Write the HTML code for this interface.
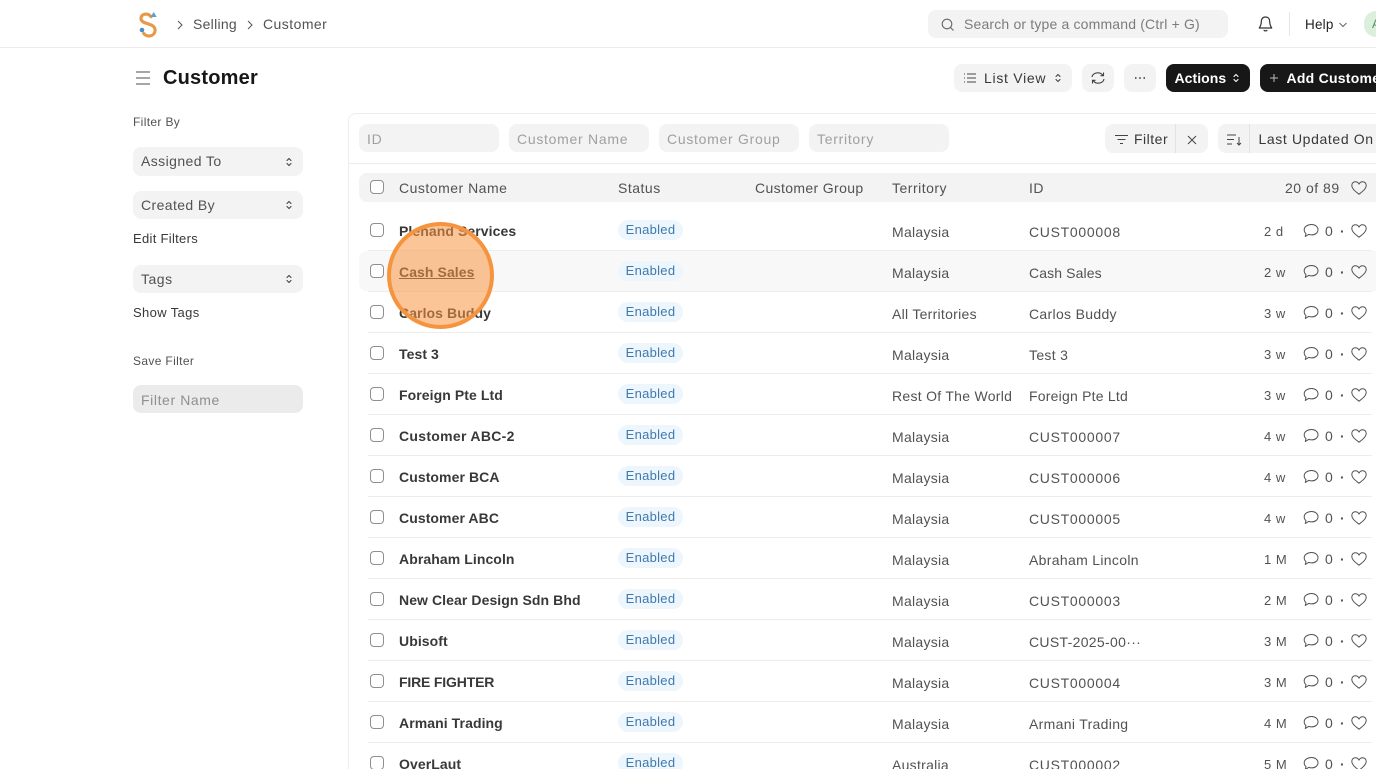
<!DOCTYPE html>
<html><head><meta charset="utf-8"><style>
html,body{margin:0;padding:0;width:1376px;height:769px;overflow:hidden;background:#fff;font-family:"Liberation Sans",sans-serif;color:#383838;font-size:14px;letter-spacing:.5px}
div,span,svg{position:absolute;white-space:nowrap}
#w{left:0;top:0;width:1376px;height:769px;overflow:hidden}
.g{background:#f3f3f3;border-radius:8px}
.ph{color:#a0a0a0;line-height:30px;top:0;left:8px;letter-spacing:.72px}
.k{background:#171717;border-radius:8px;color:#fff;font-weight:bold}
.row{left:0;width:1376px;height:41px}
.cb{left:370px;top:13px;width:12px;height:12px;border:1px solid #8f8f8f;border-radius:4px;background:#fff}
.n{left:399px;top:13px;font-weight:bold;line-height:16px;letter-spacing:.08px;color:#383838}
.bd{left:618px;top:10px;width:65px;height:20px;border-radius:10px;background:#edf6fd;color:#3f79ad;line-height:20px;text-align:center;font-size:13px;letter-spacing:.28px}
.t{left:892px;top:14px;line-height:16px;color:#525252;letter-spacing:.28px}
.i{left:1029px;top:14px;line-height:16px;color:#525252;letter-spacing:.32px}
.u{letter-spacing:.7px}
.a{left:1264px;top:14px;line-height:16px;font-size:13px;color:#525252}
.c0{left:1325px;top:13px;line-height:16px;color:#525252}
.dt{left:1340px;top:13px;line-height:16px;color:#525252;font-weight:bold}
.sep{left:368px;top:40px;width:1004px;height:1px;background:#ededed}
.hd{top:181px;line-height:14px;color:#525252}
.ci{left:1303px;top:12.500px}
.hi{left:1351px;top:13px}
</style></head><body>
<div id="w">
<svg width="0" height="0" style="left:0;top:0"><defs>
<symbol id="cm" viewBox="0 0 16 16"><path d="M8.500 1.500c3.700 0 6.500 2.200 6.500 5.200s-2.800 5.200-6.500 5.200c-1 0-1.900-.2-2.800-.5L2.300 13.500l.7-2.900C1.800 9.600 1.200 8.200 1.200 6.700c0-3 3.600-5.200 7.300-5.200z" fill="none" stroke="#525252" stroke-width="1" stroke-linejoin="round"/></symbol>
<symbol id="ht" viewBox="0 0 16 16"><path d="M8 14.200C4.500 11.500.8 8.900.8 5.300.8 3.200 2.400 1.800 4.300 1.800c1.600 0 3 .9 3.700 2.300.7-1.400 2.100-2.300 3.700-2.300 1.900 0 3.500 1.400 3.500 3.500 0 3.600-3.700 6.200-7.200 8.900z" fill="none" stroke="#525252" stroke-width="1" stroke-linejoin="round"/></symbol>
<symbol id="ud" viewBox="0 0 8 12"><path d="M2 4.500L4 2.500 6 4.500M2 7.500L4 9.500 6 7.500" fill="none" stroke="currentColor" stroke-width="1.100" stroke-linecap="round" stroke-linejoin="round"/></symbol>
</defs></svg>

<!-- navbar -->
<div style="left:0;top:47px;width:1376px;height:1px;background:#ededed"></div>
<svg style="left:137px;top:10px" width="24" height="28" viewBox="0 0 24 28"><path d="M14 6.700C11 2.500 4 3.500 4 8.500 4 13 11 13 16 16c4 3 2 10-4 10-2 0-4-1-5.300-2.500" fill="none" stroke="#e59a4a" stroke-width="3.200" stroke-linecap="round"/><path d="M13.500 7l3.200-5 3 5z" fill="#5a9fcf"/><circle cx="5" cy="20" r="2.300" fill="#4a8fc9"/></svg>
<svg style="left:176px;top:19px" width="8" height="12" viewBox="0 0 8 12"><path d="M2 2l4 4-4 4" fill="none" stroke="#525252" stroke-width="1"/></svg>
<div style="left:193px;top:16px;line-height:16px;color:#525252;letter-spacing:.28px">Selling</div>
<svg style="left:246px;top:19px" width="8" height="12" viewBox="0 0 8 12"><path d="M2 2l4 4-4 4" fill="none" stroke="#525252" stroke-width="1"/></svg>
<div style="left:263px;top:16px;line-height:16px;color:#525252;letter-spacing:.45px">Customer</div>

<div class="g" style="left:928px;top:10px;width:300px;height:28px"></div>
<svg style="left:940px;top:17px" width="15" height="15" viewBox="0 0 15 15"><circle cx="7" cy="7" r="4.800" fill="none" stroke="#666" stroke-width="1.100"/><path d="M10.500 10.500l3 3" stroke="#666" stroke-width="1.100"/></svg>
<div style="left:964px;top:16px;line-height:16px;color:#7c7c7c;letter-spacing:.17px">Search or type a command (Ctrl + G)</div>
<svg style="left:1257px;top:15px" width="17" height="18" viewBox="0 0 17 18"><path d="M8.500 2C5.800 2 4.300 4 4.300 6.500c0 3.500-1 5-2 6.500h12.400c-1-1.500-2-3-2-6.500C12.700 4 11.200 2 8.500 2zM6.800 15c.5 1.200 2.900 1.200 3.400 0" fill="none" stroke="#333" stroke-width="1.200" stroke-linejoin="round"/></svg>
<div style="left:1289px;top:12px;width:1px;height:24px;background:#e5e5e5"></div>
<div style="left:1305px;top:17px;line-height:16px;color:#222;font-size:13.500px;letter-spacing:.2px">Help</div>
<svg style="left:1338px;top:21px" width="10" height="8" viewBox="0 0 10 8"><path d="M1.500 2L5 5.500 8.500 2" fill="none" stroke="#666" stroke-width="1"/></svg>
<div style="left:1364px;top:11px;width:12px;height:26px;border-radius:13px 0 0 13px;background:#dcefdc"></div>
<div style="left:1372px;top:17px;line-height:14px;color:#4f8f5f;font-size:12px;width:4px;overflow:hidden">A</div>

<!-- page head -->
<svg style="left:136px;top:71px" width="15" height="15" viewBox="0 0 15 15"><path d="M0 1h14M0 7h14M0 13h14" stroke="#888" stroke-width="1.500"/></svg>
<div style="left:163px;top:66px;font-size:20px;line-height:24px;font-weight:bold;color:#171717;letter-spacing:.2px">Customer</div>

<div class="g" style="left:954px;top:64px;width:118px;height:28px"></div>
<svg style="left:963px;top:72px" width="14" height="12" viewBox="0 0 14 12"><path d="M4 2h9M4 6h9M4 10h9M1 2h1M1 6h1M1 10h1" stroke="#444" stroke-width="1"/></svg>
<div style="left:984px;top:70px;line-height:16px;color:#383838;letter-spacing:.72px">List View</div>
<svg style="left:1054px;top:72px;color:#444" width="8" height="12"><use href="#ud"/></svg>
<div class="g" style="left:1082px;top:64px;width:32px;height:28px"></div>
<svg style="left:1090px;top:70px" width="16" height="16" viewBox="0 0 16 16"><path d="M2 7C2.500 4.300 5 2.800 8 2.800c2 0 3.700.9 5 2.700M14 9c-.5 2.700-3 4.200-6 4.200-2 0-3.700-.9-5-2.700M13.500 2.500v3.200h-3M2.500 13.500v-3.200h3" fill="none" stroke="#444" stroke-width="1.100"/></svg>
<div class="g" style="left:1124px;top:64px;width:32px;height:28px"></div>
<svg style="left:1134px;top:76px" width="12" height="4" viewBox="0 0 12 4"><path d="M1 2h1.500M5.200 2h1.500M9.500 2H11" stroke="#333" stroke-width="1.400"/></svg>
<div class="k" style="left:1166px;top:64px;width:84px;height:28px"></div>
<div style="left:1174.500px;top:70px;line-height:16px;color:#fff;font-weight:bold;letter-spacing:.05px">Actions</div>
<svg style="left:1232px;top:72px;color:#fff" width="8" height="12"><use href="#ud"/></svg>
<div class="k" style="left:1260px;top:64px;width:116px;height:28px;border-radius:8px 0 0 8px"></div>
<svg style="left:1269px;top:73px" width="10" height="10" viewBox="0 0 10 10"><path d="M5 1v8M1 5h8" stroke="#bbb" stroke-width="1"/></svg>
<div style="left:1286.500px;top:70px;width:89.500px;overflow:hidden;line-height:16px;color:#fff;font-weight:bold;letter-spacing:.25px">Add Customer</div>

<!-- sidebar -->
<div style="left:133px;top:115px;font-size:12px;line-height:14px;color:#525252;letter-spacing:.35px">Filter By</div>
<div class="g" style="left:133px;top:147px;width:170px;height:29px"><span style="left:8px;top:6px;line-height:16px;color:#525252;letter-spacing:.42px">Assigned To</span><svg style="left:152px;top:9px;color:#444" width="8" height="12"><use href="#ud"/></svg></div>
<div class="g" style="left:133px;top:191px;width:170px;height:28px"><span style="left:8px;top:6px;line-height:16px;color:#525252;letter-spacing:.4px">Created By</span><svg style="left:152px;top:8px;color:#444" width="8" height="12"><use href="#ud"/></svg></div>
<div style="left:133px;top:231px;font-size:13px;line-height:15px;color:#383838;letter-spacing:.3px">Edit Filters</div>
<div class="g" style="left:133px;top:265px;width:170px;height:28px"><span style="left:8px;top:6px;line-height:16px;color:#525252">Tags</span><svg style="left:152px;top:8px;color:#444" width="8" height="12"><use href="#ud"/></svg></div>
<div style="left:133px;top:305px;font-size:13px;line-height:15px;color:#383838;letter-spacing:.36px">Show Tags</div>
<div style="left:133px;top:354px;font-size:12px;line-height:14px;color:#525252;letter-spacing:.35px">Save Filter</div>
<div class="g" style="left:133px;top:385px;width:170px;height:28px;background:#ebebeb"><span style="left:8px;top:7px;line-height:16px;color:#8f8f8f;letter-spacing:.6px">Filter Name</span></div>

<!-- list frame -->
<div style="left:348px;top:113px;width:1028px;height:656px;border:1px solid #ededed;border-width:1px 0 0 1px;border-radius:8px 0 0 0;box-sizing:border-box"></div>
<div style="left:349px;top:163px;width:1027px;height:1px;background:#ededed"></div>
<div class="g" style="left:359px;top:124px;width:140px;height:28px"><span class="ph" style="top:0">ID</span></div>
<div class="g" style="left:509px;top:124px;width:140px;height:28px"><span class="ph">Customer Name</span></div>
<div class="g" style="left:659px;top:124px;width:140px;height:28px"><span class="ph">Customer Group</span></div>
<div class="g" style="left:809px;top:124px;width:140px;height:28px"><span class="ph">Territory</span></div>
<div class="g" style="left:1105px;top:124px;width:103px;height:29px"></div>
<div style="left:1175px;top:124px;width:1px;height:29px;background:#e2e2e2"></div>
<svg style="left:1114px;top:134px" width="15" height="11" viewBox="0 0 15 11"><path d="M1 1.500h13M3.500 5.500h8M6 9.500h3" stroke="#444" stroke-width="1"/></svg>
<div style="left:1134px;top:131px;line-height:16px;color:#383838">Filter</div>
<svg style="left:1187px;top:135px" width="10" height="10" viewBox="0 0 10 10"><path d="M1 1l8 8M9 1L1 9" stroke="#444" stroke-width="1"/></svg>
<div class="g" style="left:1218px;top:124px;width:158px;height:29px;border-radius:8px 0 0 8px"></div>
<div style="left:1249px;top:124px;width:1px;height:29px;background:#e2e2e2"></div>
<svg style="left:1226px;top:133px" width="16" height="13" viewBox="0 0 16 13"><path d="M1 2h9M1 6.500h7M1 11h5M13 4v8M11 10l2 2 2-2" fill="none" stroke="#444" stroke-width="1"/></svg>
<div style="left:1258.500px;top:131px;line-height:16px;color:#383838;letter-spacing:.62px">Last Updated On</div>

<!-- header -->
<div class="g" style="left:359px;top:173px;width:1017px;height:29px;border-radius:8px 0 0 8px"></div>
<div class="cb" style="top:180px"></div>
<div class="hd" style="left:399px">Customer Name</div>
<div class="hd" style="left:618px">Status</div>
<div class="hd" style="left:755px;letter-spacing:.36px">Customer Group</div>
<div class="hd" style="left:892px">Territory</div>
<div class="hd" style="left:1029px">ID</div>
<div class="hd" style="left:1285px">20 of 89</div>
<svg style="left:1351px;top:180px" width="16" height="16"><use href="#ht"/></svg>

<!-- rows -->
<div class="row" style="top:210px"><div class="sep"></div><div class="cb"></div><div class="n">Plenand Services</div><div class="bd">Enabled</div><div class="t">Malaysia</div><div class="i u">CUST000008</div><div class="a">2 d</div><svg class="ci" width="16" height="16"><use href="#cm"/></svg><div class="c0">0</div><div class="dt">·</div><svg class="hi" width="16" height="16"><use href="#ht"/></svg></div>
<div style="left:359px;top:251px;width:1017px;height:40px;background:#f8f8f8;border-radius:8px 0 0 8px"></div>
<div class="row" style="top:251px"><div class="sep"></div><div class="cb"></div><div class="n" style="text-decoration:underline">Cash Sales</div><div class="bd">Enabled</div><div class="t">Malaysia</div><div class="i" style="letter-spacing:.12px">Cash Sales</div><div class="a">2 w</div><svg class="ci" width="16" height="16"><use href="#cm"/></svg><div class="c0">0</div><div class="dt">·</div><svg class="hi" width="16" height="16"><use href="#ht"/></svg></div>
<div class="row" style="top:292px"><div class="sep"></div><div class="cb"></div><div class="n">Carlos Buddy</div><div class="bd">Enabled</div><div class="t">All Territories</div><div class="i">Carlos Buddy</div><div class="a">3 w</div><svg class="ci" width="16" height="16"><use href="#cm"/></svg><div class="c0">0</div><div class="dt">·</div><svg class="hi" width="16" height="16"><use href="#ht"/></svg></div>
<div class="row" style="top:333px"><div class="sep"></div><div class="cb"></div><div class="n">Test 3</div><div class="bd">Enabled</div><div class="t">Malaysia</div><div class="i">Test 3</div><div class="a">3 w</div><svg class="ci" width="16" height="16"><use href="#cm"/></svg><div class="c0">0</div><div class="dt">·</div><svg class="hi" width="16" height="16"><use href="#ht"/></svg></div>
<div class="row" style="top:374px"><div class="sep"></div><div class="cb"></div><div class="n">Foreign Pte Ltd</div><div class="bd">Enabled</div><div class="t">Rest Of The World</div><div class="i" style="letter-spacing:.22px">Foreign Pte Ltd</div><div class="a">3 w</div><svg class="ci" width="16" height="16"><use href="#cm"/></svg><div class="c0">0</div><div class="dt">·</div><svg class="hi" width="16" height="16"><use href="#ht"/></svg></div>
<div class="row" style="top:415px"><div class="sep"></div><div class="cb"></div><div class="n" style="letter-spacing:.3px">Customer ABC-2</div><div class="bd">Enabled</div><div class="t">Malaysia</div><div class="i u">CUST000007</div><div class="a">4 w</div><svg class="ci" width="16" height="16"><use href="#cm"/></svg><div class="c0">0</div><div class="dt">·</div><svg class="hi" width="16" height="16"><use href="#ht"/></svg></div>
<div class="row" style="top:456px"><div class="sep"></div><div class="cb"></div><div class="n">Customer BCA</div><div class="bd">Enabled</div><div class="t">Malaysia</div><div class="i u">CUST000006</div><div class="a">4 w</div><svg class="ci" width="16" height="16"><use href="#cm"/></svg><div class="c0">0</div><div class="dt">·</div><svg class="hi" width="16" height="16"><use href="#ht"/></svg></div>
<div class="row" style="top:497px"><div class="sep"></div><div class="cb"></div><div class="n">Customer ABC</div><div class="bd">Enabled</div><div class="t">Malaysia</div><div class="i u">CUST000005</div><div class="a">4 w</div><svg class="ci" width="16" height="16"><use href="#cm"/></svg><div class="c0">0</div><div class="dt">·</div><svg class="hi" width="16" height="16"><use href="#ht"/></svg></div>
<div class="row" style="top:538px"><div class="sep"></div><div class="cb"></div><div class="n">Abraham Lincoln</div><div class="bd">Enabled</div><div class="t">Malaysia</div><div class="i">Abraham Lincoln</div><div class="a">1 M</div><svg class="ci" width="16" height="16"><use href="#cm"/></svg><div class="c0">0</div><div class="dt">·</div><svg class="hi" width="16" height="16"><use href="#ht"/></svg></div>
<div class="row" style="top:579px"><div class="sep"></div><div class="cb"></div><div class="n">New Clear Design Sdn Bhd</div><div class="bd">Enabled</div><div class="t">Malaysia</div><div class="i u">CUST000003</div><div class="a">2 M</div><svg class="ci" width="16" height="16"><use href="#cm"/></svg><div class="c0">0</div><div class="dt">·</div><svg class="hi" width="16" height="16"><use href="#ht"/></svg></div>
<div class="row" style="top:620px"><div class="sep"></div><div class="cb"></div><div class="n">Ubisoft</div><div class="bd">Enabled</div><div class="t">Malaysia</div><div class="i">CUST-2025-00···</div><div class="a">3 M</div><svg class="ci" width="16" height="16"><use href="#cm"/></svg><div class="c0">0</div><div class="dt">·</div><svg class="hi" width="16" height="16"><use href="#ht"/></svg></div>
<div class="row" style="top:661px"><div class="sep"></div><div class="cb"></div><div class="n" style="letter-spacing:-.17px">FIRE FIGHTER</div><div class="bd">Enabled</div><div class="t">Malaysia</div><div class="i u">CUST000004</div><div class="a">3 M</div><svg class="ci" width="16" height="16"><use href="#cm"/></svg><div class="c0">0</div><div class="dt">·</div><svg class="hi" width="16" height="16"><use href="#ht"/></svg></div>
<div class="row" style="top:702px"><div class="sep"></div><div class="cb"></div><div class="n">Armani Trading</div><div class="bd">Enabled</div><div class="t">Malaysia</div><div class="i">Armani Trading</div><div class="a">4 M</div><svg class="ci" width="16" height="16"><use href="#cm"/></svg><div class="c0">0</div><div class="dt">·</div><svg class="hi" width="16" height="16"><use href="#ht"/></svg></div>
<div class="row" style="top:743px;height:26px;overflow:hidden"><div class="cb"></div><div class="n">OverLaut</div><div class="bd">Enabled</div><div class="t">Australia</div><div class="i u">CUST000002</div><div class="a">5 M</div><svg class="ci" width="16" height="16"><use href="#cm"/></svg><div class="c0">0</div><div class="dt">·</div><svg class="hi" width="16" height="16"><use href="#ht"/></svg></div>

<!-- click highlight -->
<div style="left:387px;top:222px;width:107px;height:107px;box-sizing:border-box;border-radius:50%;border:4px solid #f5943f;background:rgba(247,150,66,.55)"></div>
</div>
</body></html>
